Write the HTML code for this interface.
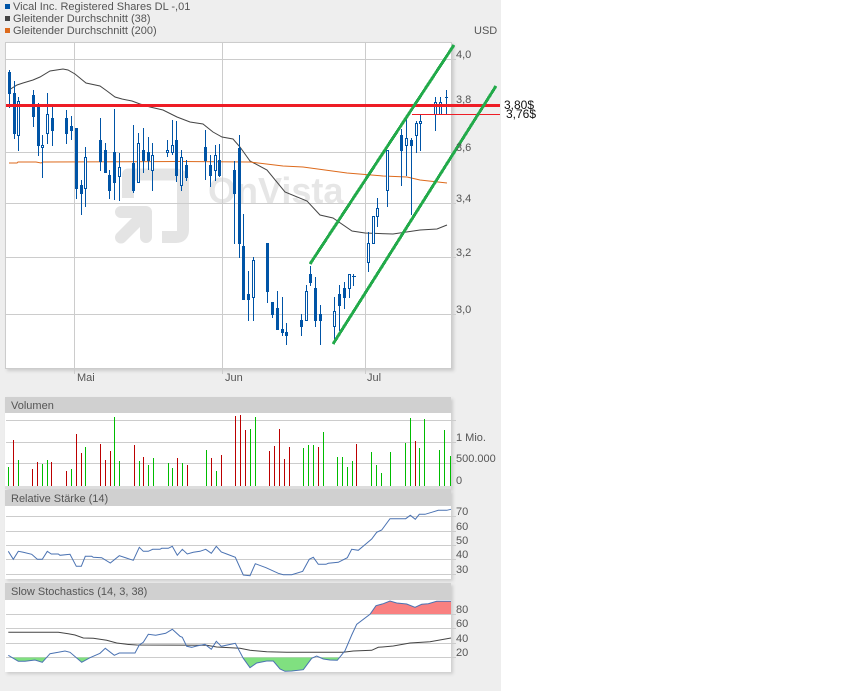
<!DOCTYPE html>
<html>
<head>
<meta charset="utf-8">
<title>Vical Inc. Chart</title>
<style>
html,body{margin:0;padding:0;background:#fff;width:850px;height:691px;overflow:hidden}
#bg{position:absolute;left:0;top:0;width:501px;height:691px;background:#eee}
.p{position:absolute;background:#fff;box-shadow:2px 2px 3px #ccc}
.h{position:absolute;background:#d0d0d0}
svg{position:absolute;left:0;top:0}
text{font-family:"Liberation Sans",Arial,sans-serif;font-size:11px;fill:#555}
</style>
</head>
<body>
<div id="bg"></div>
<div class="p" style="left:5px;top:42px;width:445px;height:325px;border:1px solid #ccc"></div>
<div class="p" style="left:5px;top:397px;width:446px;height:92px"></div>
<div class="h" style="left:5px;top:397px;width:446px;height:16px"></div>
<div class="h" style="left:5px;top:486px;width:446px;height:3px;background:#ddd"></div>
<div class="p" style="left:5px;top:490px;width:446px;height:89px"></div>
<div class="h" style="left:5px;top:490px;width:446px;height:16px"></div>
<div class="p" style="left:5px;top:583px;width:446px;height:89px"></div>
<div class="h" style="left:5px;top:583px;width:446px;height:17px"></div>
<svg width="850" height="691" viewBox="0 0 850 691" xmlns="http://www.w3.org/2000/svg">
<defs>
<clipPath id="cg"><rect x="5" y="657.5" width="446" height="15"/></clipPath>
<clipPath id="cr"><rect x="5" y="599" width="446" height="15"/></clipPath>
<path id="st" d="M8.3 655.3L18.3 661.3L25 661.3L35 660L42.3 662.3L50 653.7L58.3 652.3L65 651L70 652.3L81.7 662.3L90 657.7L100 653.3L105.3 648.3L114.3 655.3L119.3 653L135 653L139.3 645L143.3 642.3L148.3 634.3L155.7 635.3L165.7 633.3L172.3 629.3L180 636.3L182.3 637.3L186.7 646.3L191.7 647.3L196.7 646L205 644.3L211.3 649.3L216.3 641.3L221.3 646.3L233.3 643.7L235.3 643.3L243.3 658.3L250 667.7L256.7 663L266.7 661L273.3 661L280 669L285 671.3L291.7 671L303.3 669.7L311.7 658.3L316.7 656L323.3 659L330 660L337.3 660.3L345 650.7L351.7 635L356.7 624.3L370 614.3L376 605.7L383.3 603.7L390 601L396.7 603L406.7 604L415 607.3L421.7 604.3L428.3 603.7L436.7 601.3L451 601.3"/>
</defs>

<!-- watermark -->
<g fill="none" stroke="#e4e4e4" stroke-width="12" stroke-linejoin="round">
<path d="M121 212H146V237M146 212.5L121 237.5" stroke-linecap="round"/>
<path d="M162 237H176Q183 237 183 230V181Q183 174.500 176 174.500H128V198" stroke-linecap="butt"/>
</g>
<text x="208" y="203" style="font-size:36px;font-weight:bold;fill:#e6e6e6">OnVista</text>

<!-- main grid -->
<path shape-rendering="crispEdges" fill="none" stroke="#ccc" d="M6 59.5H456M6 152.5H456M6 203.5H456M6 257.5H456M6 314.5H456M74.5 43V374M222.5 43V374M365.5 43V374"/>

<!-- MAs -->
<polyline fill="none" stroke="#444" stroke-width="1" points="9,90 17,85 23,83 33,80 40,77 50,71 63,69 68,70 75,74 86,83 100,86 107,91 115,97 122,99 132,101 140,104 150,107 163,110 177,117 190,122 203,124 213,132 222,137 233,139 240,147 250,161 267,170 285,192 307,201 320,215 333,218 352,231 365,233 393,234 420,230 437,229 447,225"/>
<polyline fill="none" stroke="#dd6a1c" stroke-width="1" points="9,163 17,163 18,162 36,162 41,163 43,162 180,161.5 250,162 283,166 303,167 347,173 383,176 407,177 420,180 447,183"/>

<!-- candles: wicks -->
<path shape-rendering="crispEdges" fill="none" stroke="#0054a6" stroke-width="1" d="M9.5 70V108M14.5 81V139M18.5 97V151M33.5 90V127M38.5 103V156M42.5 135V178M47.5 93V144M52.5 107V146M66.5 110V144M71.5 116V140M76.5 128V199M81.5 180V215M85.5 147V207M100.5 118V171M105.5 143V173M109.5 170V199M114.5 109V200M119.5 153V201M133.5 125V193M138.5 133V183M143.5 128V173M148.5 137V170M152.5 143V191M167.5 140V157M172.5 120V155M176.5 121V182M181.5 150V191M186.5 160V181M205.5 130V180M210.5 155V187M215.5 145V181M219.5 144V177M234.5 161V244M239.5 135V258M243.5 214V300M248.5 271V321M253.5 257V321M267.5 243V303M272.5 302V318M277.5 291V330M282.5 297V336M286.5 323V345M301.5 314V336M306.5 285V321M310.5 266V286M315.5 277V327M320.5 305V345M334.5 297V340M339.5 285V331M344.5 282V309M349.5 274V298M353.5 274V286M368.5 232V272M373.5 216V244M377.5 198V227M387.5 150V207M401.5 129V186M406.5 119V176M411.5 138V215M416.5 121V153M420.5 115V151M435.5 97V131M440.5 97V115M446.5 90V114"/>
<!-- solid bodies -->
<path shape-rendering="crispEdges" fill="none" stroke="#0054a6" stroke-width="3" d="M9.5 72V94M14.5 93V134M33.5 95V117M38.5 106V146M52.5 118V131M66.5 118V134M71.5 126V131M76.5 128V189M81.5 185V194M100.5 140V162M105.5 150V173M109.5 175V191M114.5 152V183M133.5 163V191M143.5 150V161M148.5 152V161M176.5 140V176M186.5 165V178M205.5 147V161M210.5 165V176M219.5 160V176M234.5 170V194M239.5 148V244M243.5 246V300M248.5 294V300M267.5 243V292M272.5 302V315M277.5 308V330M282.5 329V333M286.5 332V336M301.5 320V327M310.5 274V283M315.5 288V321M320.5 314V321M339.5 294V306M344.5 288V298M401.5 135V151M411.5 140V146"/>
<!-- hollow bodies -->
<path shape-rendering="crispEdges" fill="#fff" stroke="#0054a6" stroke-width="1" d="M17.5 101.5h2v34h-2zM41.5 145.5h2v2h-2zM46.5 114.5h2v19h-2zM84.5 157.5h2v31h-2zM118.5 167.5h2v9h-2zM137.5 143.5h2v39h-2zM151.5 155.5h2v15h-2zM166.5 150.5h2v2h-2zM171.5 145.5h2v7h-2zM180.5 157.5h2v28h-2zM214.5 155.5h2v15h-2zM252.5 260.5h2v37h-2zM305.5 291.5h2v29h-2zM333.5 311.5h2v15h-2zM348.5 274.5h2v14h-2zM367.5 243.5h2v19h-2zM372.5 216.5h2v27h-2zM376.5 208.5h2v8h-2zM386.5 150.5h2v40h-2zM405.5 138.5h2v7h-2zM415.5 123.5h2v12h-2zM419.5 121.5h2v2h-2zM434.5 102.5h2v12h-2zM439.5 102.5h2v12h-2z"/>
<path shape-rendering="crispEdges" stroke="#0054a6" d="M352 276.5h4M445 97.5h3"/>

<!-- overlays -->
<rect x="6" y="104" width="494" height="3" fill="#ee1c25"/>
<rect x="412" y="114" width="88" height="1" fill="#ee1c25"/>
<path shape-rendering="crispEdges" fill="none" stroke="#22aa4a" stroke-width="3" d="M310 264L454 45M333 344L496 86"/>
<text x="504" y="109" style="font-size:12px;fill:#111">3,80$</text>
<text x="506" y="118" style="font-size:12px;fill:#111">3,76$</text>

<!-- legend -->
<rect x="5" y="4" width="5" height="5" fill="#0054a6"/>
<rect x="5" y="16" width="5" height="5" fill="#444"/>
<rect x="5" y="28" width="5" height="5" fill="#dd6a1c"/>
<text x="13" y="10">Vical Inc. Registered Shares DL -,01</text>
<text x="13" y="22">Gleitender Durchschnitt (38)</text>
<text x="13" y="34">Gleitender Durchschnitt (200)</text>

<!-- axis labels -->
<text x="474" y="34">USD</text>
<text x="456" y="58">4,0</text>
<text x="456" y="103">3,8</text>
<text x="456" y="151">3,6</text>
<text x="456" y="202">3,4</text>
<text x="456" y="256">3,2</text>
<text x="456" y="313">3,0</text>
<text x="77" y="381">Mai</text>
<text x="225" y="381">Jun</text>
<text x="367" y="381">Jul</text>

<!-- volume -->
<text x="11" y="409">Volumen</text>
<path shape-rendering="crispEdges" fill="none" stroke="#ccc" d="M6 420.5H456M6 442.5H456M6 463.5H456"/>
<path shape-rendering="crispEdges" fill="none" stroke="#00bb00" d="M8.5 467V486M18.5 460V486M42.5 464V486M47.5 460V486M71.5 469V486M85.5 447V486M114.5 417V486M119.5 461V486M139.5 461V486M148.5 465V486M153.5 458V486M168.5 463V486M172.5 468V486M182.5 463V486M206.5 450V486M216.5 471V486M250.5 429V486M255.5 417V486M303.5 448V486M308.5 445V486M313.5 445V486M323.5 432V486M337.5 457V486M342.5 457V486M347.5 467V486M352.5 461V486M371.5 452V486M376.5 465V486M381.5 473V486M390.5 452V486M405.5 443V486M410.5 418V486M419.5 448V486M424.5 419V486M439.5 450V486M444.5 430V486M450.5 456V486"/>
<path shape-rendering="crispEdges" fill="none" stroke="#bb0000" d="M13.5 440V486M32.5 469V486M37.5 462V486M51.5 462V486M66.5 471V486M76.5 434V486M81.5 453V486M100.5 444V486M105.5 460V486M110.5 451V486M134.5 445V486M143.5 457V486M177.5 458V486M187.5 465V486M211.5 458V486M221.5 455V486M235.5 416V486M240.5 415V486M245.5 430V486M269.5 451V486M274.5 446V486M279.5 429V486M284.5 459V486M289.5 447V486M318.5 447V486M356.5 444V486M415.5 441V486"/>
<text x="456" y="441">1 Mio.</text>
<text x="456" y="462">500.000</text>
<text x="456" y="484">0</text>

<!-- RSI -->
<text x="11" y="502">Relative Stärke (14)</text>
<path shape-rendering="crispEdges" fill="none" stroke="#ccc" d="M6 516.5H456M6 531.5H456M6 545.5H456M6 559.5H456M6 574.5H456"/>
<polyline fill="none" stroke="#4a72b2" stroke-width="1" points="8.3,551.3 13.3,559.3 18.3,551.3 23.3,552.3 31.7,554.3 37.3,559.3 42.3,559.3 47.3,551.3 51.3,554 58.3,554 60,555.3 70,554.3 76.3,566.3 81.3,566.3 85.3,556.3 91.7,556.3 93.3,557.3 101.7,557.7 110.3,563 119.3,555.7 133.3,560.3 139.3,547.3 143.3,551.3 148.3,551.3 152.7,549.3 160,549.3 161.7,548.3 168.3,548.3 172.3,546.3 177.3,555.3 182.3,549.3 187.3,554 193.3,552.3 200,551.3 205.7,549.3 211.3,553.3 216.3,546.3 221.3,552 226.7,554 235.3,557.3 243.3,575 250,575.7 255.3,563.7 266,567.7 278.3,573.3 283.3,574.7 291.7,574.7 302.7,571.3 309.3,559.3 313.3,557.3 318.3,564.3 326,564.3 328.3,563.3 338.3,562.3 347.3,557.7 351.7,549.3 358.3,550.3 366.7,543.3 371.7,539 376.7,532.3 381.7,530 390,518.7 405.7,518.7 410.3,515.3 415.3,519.3 419.3,514.3 425,514.3 431.7,512.3 438.3,510.3 446.7,510.3 451,509.3"/>
<text x="456" y="515">70</text>
<text x="456" y="530">60</text>
<text x="456" y="544">50</text>
<text x="456" y="558">40</text>
<text x="456" y="573">30</text>

<!-- Stochastics -->
<text x="11" y="595">Slow Stochastics (14, 3, 38)</text>
<path shape-rendering="crispEdges" fill="none" stroke="#ccc" d="M6 614.5H456M6 628.5H456M6 643.5H456M6 657.5H456"/>
<path clip-path="url(#cg)" fill="#80e080" d="M8.3 655.3L18.3 661.3L25 661.3L35 660L42.3 662.3L50 653.7L58.3 652.3L65 651L70 652.3L81.7 662.3L90 657.7L100 653.3L105.3 648.3L114.3 655.3L119.3 653L135 653L139.3 645L143.3 642.3L148.3 634.3L155.7 635.3L165.7 633.3L172.3 629.3L180 636.3L182.3 637.3L186.7 646.3L191.7 647.3L196.7 646L205 644.3L211.3 649.3L216.3 641.3L221.3 646.3L233.3 643.7L235.3 643.3L243.3 658.3L250 667.7L256.7 663L266.7 661L273.3 661L280 669L285 671.3L291.7 671L303.3 669.7L311.7 658.3L316.7 656L323.3 659L330 660L337.3 660.3L345 650.7L351.7 635L451 635V657.5H8.3Z"/>
<path clip-path="url(#cr)" fill="#f98080" d="M356.7 624.3L370 614.3L376 605.7L383.3 603.7L390 601L396.7 603L406.7 604L415 607.3L421.7 604.3L428.3 603.7L436.7 601.3L451 601.3V624.3Z"/>
<polyline fill="none" stroke="#444" stroke-width="1" points="8.3,632.3 58.3,632.3 68.3,633.7 75,635 83.3,638 93.3,638.3 106.7,640.3 116.7,643 126.7,644.3 136.7,645 206.7,645.3 216.7,647 240,648.3 250,650.3 266.7,651.7 286.7,652.3 343.3,652.3 353.3,651 371.7,650.3 378.3,647.3 393.3,646 410,643 430,641.7 451,638"/>
<use href="#st" fill="none" stroke="#4a72b2" stroke-width="1"/>
<text x="456" y="613">80</text>
<text x="456" y="627">60</text>
<text x="456" y="642">40</text>
<text x="456" y="656">20</text>
</svg>
</body>
</html>
